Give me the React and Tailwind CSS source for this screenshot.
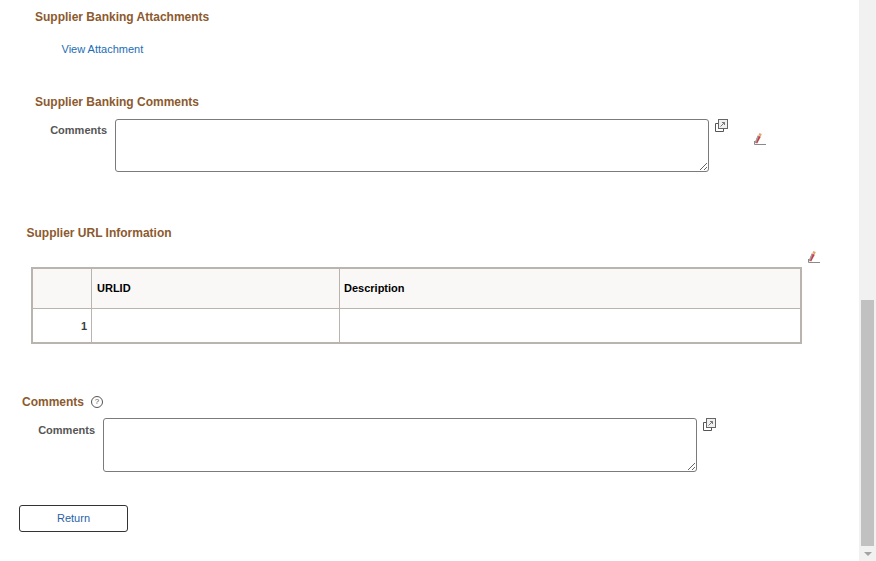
import React from "react";

const PopupIcon = () => (
  <svg width="13" height="13" viewBox="0 0 13 13" fill="none" className="block">
    <path d="M0.5 4.5H3.5V9.5H8.5V12.5H0.5Z" fill="#fff" stroke="#555" />
    <rect x="3.5" y="0.5" width="9" height="9" fill="#f0f0f0" stroke="#666" />
    <path d="M5.5 7.5L9.5 3.5M7 3.5H9.5V6" stroke="#777" strokeWidth="1" />
  </svg>
);

const EditIcon = () => (
  <svg width="12" height="12" viewBox="0 0 12 12" fill="none" className="block">
    <path d="M0.5 8V11.5H12" stroke="#8a8a8a" strokeWidth="1" />
    <path d="M1 9.5L4 2.5L6.8 3.8L3.2 10.5Z" fill="#cc3b42" />
    <path d="M0.8 9.5L3.6 2.6L4.8 3.2L2 10.5Z" fill="#a0a0a0" />
    <path d="M4.5 2L5.4 0L7.8 1L6.8 3.4Z" fill="#dfa86e" />
  </svg>
);

const Heading = ({ children, className = "" }) => (
  <h2 className={`text-[12px] leading-[14px] font-bold text-[#8c5a2e] ${className}`}>{children}</h2>
);

export default function App() {
  return (
    <div
      className="flex h-[561px] w-[876px] overflow-hidden bg-white"
      style={{ fontFamily: '"Liberation Sans", Arial, sans-serif' }}
    >
      <main className="w-[859px] shrink-0">
        {/* Attachments */}
        <section className="pl-[35px] pt-[10px]">
          <Heading>Supplier Banking Attachments</Heading>
          <a className="block ml-[26.5px] mt-[19px] text-[11px] leading-[13px] text-[#1a6db5]">View Attachment</a>
        </section>

        {/* Banking comments */}
        <section className="mt-[39px]">
          <Heading className="pl-[35px]">Supplier Banking Comments</Heading>
          <div className="flex items-start mt-[10px]">
            <label className="w-[115px] pt-[5px] pr-2 text-right text-[11px] leading-[13px] font-bold text-[#555]">
              Comments
            </label>
            <textarea className="w-[594px] h-[53px] block border border-[#7b7b7b] rounded-[3px] bg-white outline-none" />
            <div className="ml-[6px]">
              <PopupIcon />
            </div>
            <div className="ml-[26px] mt-[14px]">
              <EditIcon />
            </div>
          </div>
        </section>

        {/* URL grid */}
        <section className="mt-[54px]">
          <Heading className="pl-[26.5px]">Supplier URL Information</Heading>
          <div className="flex justify-end w-[820px] mt-[11px] h-[13px]">
            <EditIcon />
          </div>
          <div className="ml-[31px] w-[771px] mt-[3px] border-2 border-[#b9b4ae]">
            <div className="grid grid-cols-[59px_248px_1fr] h-[40px] bg-[#faf8f6] border-b border-[#b9b4ae] text-[11px] font-bold text-black">
              <div className="border-r border-[#b9b4ae]" />
              <div className="border-r border-[#b9b4ae] pl-[5px] flex items-center">URLID</div>
              <div className="pl-[4px] flex items-center">Description</div>
            </div>
            <div className="grid grid-cols-[59px_248px_1fr] h-[33px] text-[11px]">
              <div className="border-r border-[#b9b4ae] pr-[4px] pt-[2px] flex items-center justify-end font-bold text-[#3d3d3d]">1</div>
              <div className="border-r border-[#b9b4ae]" />
              <div />
            </div>
          </div>
        </section>

        {/* Comments */}
        <section className="mt-[51px]">
          <div className="flex items-center pl-[22px] gap-[7px] h-[14px]">
            <Heading>Comments</Heading>
            <span className="flex items-center justify-center w-[12px] h-[12px] rounded-full border border-[#555] text-[8px] leading-none text-[#555]">?</span>
          </div>
          <div className="flex items-start mt-[9px]">
            <label className="w-[103px] pt-[6px] pr-2 text-right text-[11px] leading-[13px] font-bold text-[#555]">
              Comments
            </label>
            <textarea className="w-[594px] h-[54px] block border border-[#7b7b7b] rounded-[3px] bg-white outline-none" />
            <div className="ml-[6px]">
              <PopupIcon />
            </div>
          </div>
        </section>

        <button className="block ml-[19px] mt-[33px] w-[109px] h-[27px] border border-[#333] rounded-[3px] bg-white text-[11px] text-[#2a5fa8]">
          Return
        </button>
      </main>

      {/* Scrollbar */}
      <aside className="w-[17px] shrink-0 bg-[#f1f1f1] flex flex-col items-center justify-end">
        <div className="w-[13px] h-[246px] bg-[#c1c1c1]" />
        <div className="h-[15px] flex items-center justify-center">
          <div className="w-0 h-0 border-l-[4px] border-r-[4px] border-t-[4px] border-l-transparent border-r-transparent border-t-[#a3a3a3]" />
        </div>
      </aside>
    </div>
  );
}
